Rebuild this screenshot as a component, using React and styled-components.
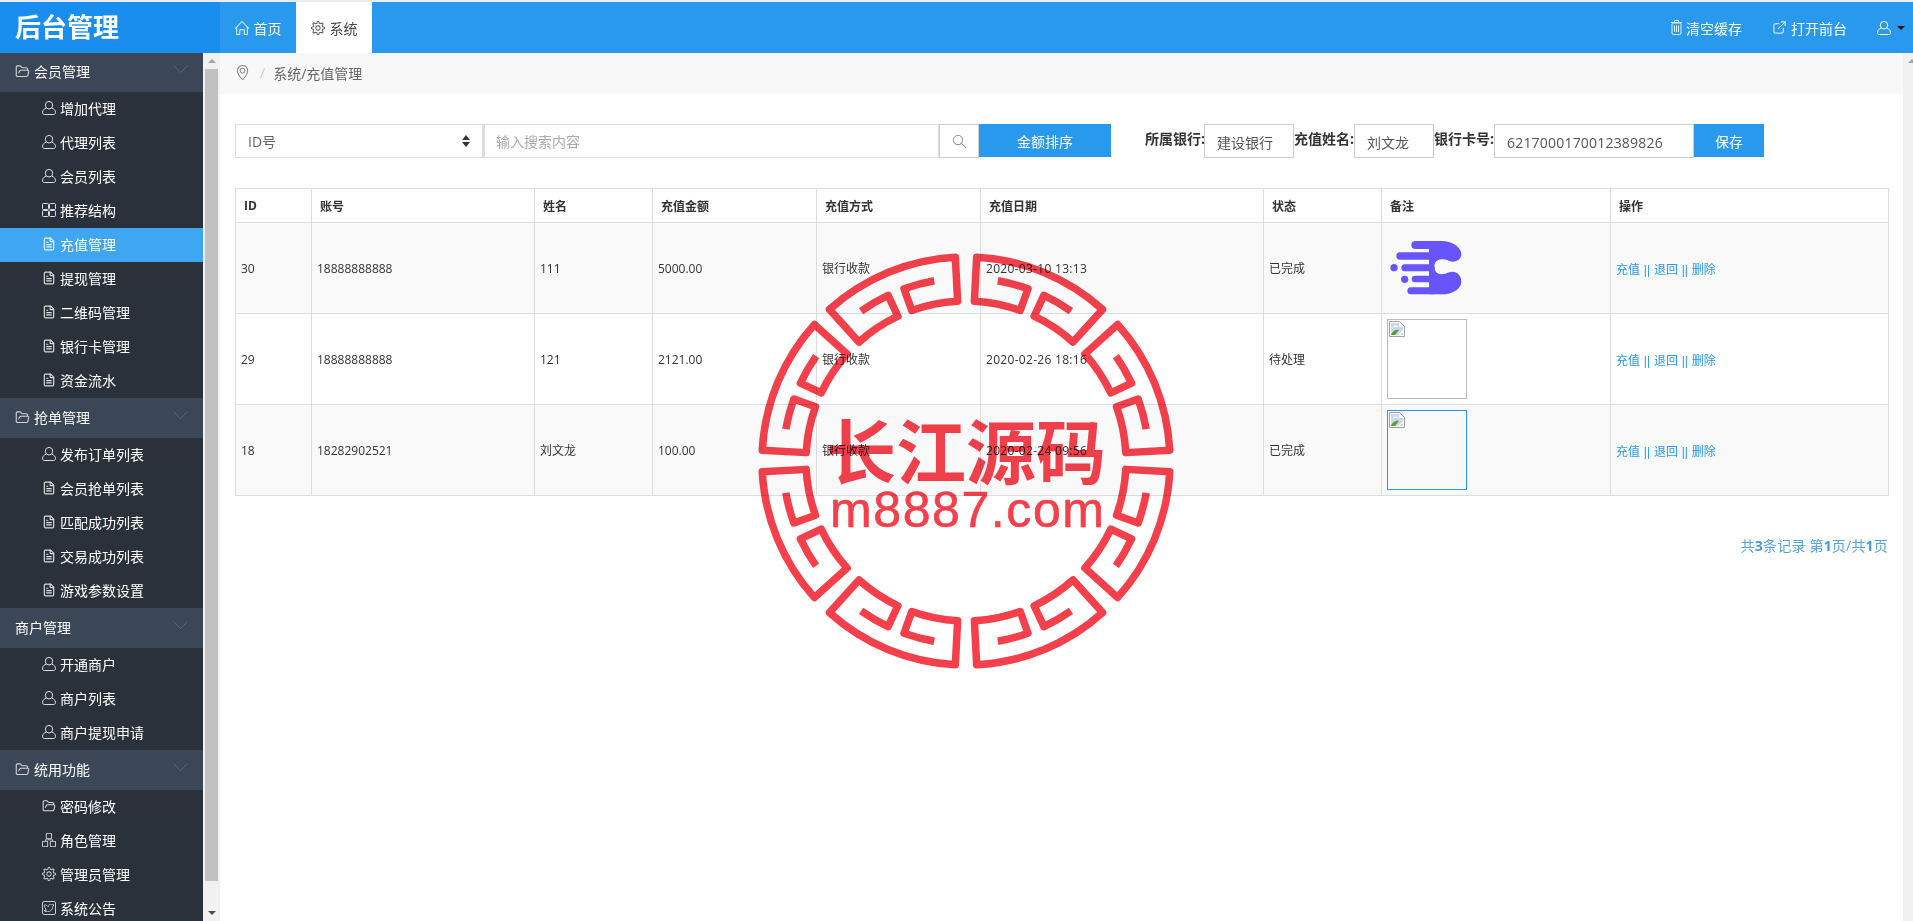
import React from "react";
import styled, { createGlobalStyle } from "styled-components";
import { SlHome, SlSettings, SlOrganization, SlSocialTwitter, SlLocationPin, SlMagnifier } from "react-icons/sl";
import { FileText, ExternalLink, FolderOpen } from "lucide-react";

const Global = createGlobalStyle`
  html, body { margin: 0; padding: 0; background: #fff; overflow: hidden; }
  * { box-sizing: border-box; }
  body { font-family: "Open Sans", "Noto Sans CJK SC", sans-serif; font-size: 14px; color: #333; }
`;

const Page = styled.div`
  position: relative;
  width: 1913px;
  height: 921px;
  overflow: hidden;
  display: flex;
  flex-direction: column;
  border-top: 2px solid #e9eef2;
`;

const Header = styled.header`
  height: 51px;
  flex: none;
  display: flex;
  background: #2899ed;
  color: #fff;
`;
const Logo = styled.div`
  width: 220px;
  background: #1a8eee;
  padding-left: 15px;
  font-size: 26px;
  font-weight: 700;
  line-height: 50px;
`;
const Tab = styled.div`
  width: 76px;
  display: flex;
  align-items: center;
  justify-content: center;
  gap: 5px;
  background: ${p => (p.$active ? "#fff" : "#2899ed")};
  color: ${p => (p.$active ? "#444" : "#fff")};
  svg { font-size: 14px; }
`;
const HeaderRight = styled.div`
  margin-left: auto;
  display: flex;
  align-items: center;
  padding-right: 8px;
`;
const HeaderLink = styled.div`
  display: flex;
  align-items: center;
  gap: 4px;
  margin-right: 30px;
`;
const Caret = styled.span`
  margin-left: 6px;
  border-left: 4px solid transparent;
  border-right: 4px solid transparent;
  border-top: 4px solid #111;
`;

const Body = styled.div`
  flex: 1;
  min-height: 0;
  display: flex;
`;
const Sidebar = styled.nav`
  width: 203px;
  flex: none;
  background: #2a313b;
  overflow: hidden;
`;
const SideList = styled.div`
  margin-top: -1px;
`;
const Group = styled.div`
  height: 40px;
  display: flex;
  align-items: center;
  gap: 4px;
  padding: 0 15px 2px;
  background: #3b4657;
  color: #fff;
  svg.lead { width: 15px; height: 15px; color: #d0d3d6; }
`;
const Chevron = styled.svg`
  margin-left: auto;
  margin-bottom: 3px;
`;
const Item = styled.div`
  height: 34px;
  display: flex;
  align-items: center;
  gap: 4px;
  padding: 0 0 2px 42px;
  color: #fff;
  background: ${p => (p.$active ? "#3fa6f2" : "transparent")};
  svg { flex: none; width: 14px; height: 14px; color: ${p => (p.$active ? "#e8f4fd" : "#dcdee0")}; }
`;
const BoxedIcon = styled.span`
  width: 14px;
  height: 14px;
  flex: none;
  border: 1px solid #c9ccd0;
  border-radius: 2px;
  display: flex;
  align-items: center;
  justify-content: center;
  svg { width: 10px; height: 10px; }
`;

const Track = styled.div`
  flex: none;
  width: ${p => p.$w}px;
  background: #f1f1f1;
  display: flex;
  flex-direction: column;
  align-items: center;
`;
const Thumb = styled.div`
  width: 13px;
  height: 812px;
  background: #c1c1c1;
`;
const ArrowBtn = styled.div`
  height: 16px;
  flex: none;
  display: flex;
  align-items: center;
  justify-content: center;
  align-self: ${p => (p.$edge ? "flex-end" : "center")};
  margin-right: ${p => (p.$edge ? "-3px" : "0")};
  margin-top: ${p => (p.$down ? "auto" : "0")};
  &::before {
    content: "";
    border-left: 4px solid transparent;
    border-right: 4px solid transparent;
    ${p => (p.$down ? "border-top: 4px solid #505050;" : "border-bottom: 4px solid #a3a3a3;")}
  }
`;

const Main = styled.main`
  flex: 1;
  min-width: 0;
  display: flex;
  flex-direction: column;
`;
const Crumb = styled.div`
  height: 41px;
  flex: none;
  background: #f8f8f8;
  padding: 0 0 2px 15px;
  display: flex;
  align-items: center;
  color: #666;
  font-size: 14px;
  svg { font-size: 15px; color: #808080; }
`;
const Slash = styled.span`
  color: #ccc;
  margin: 0 8px 0 10px;
`;
const Content = styled.div`
  padding: 30px 15px 0 15px;
`;
const Toolbar = styled.div`
  height: 34px;
  display: flex;
  align-items: stretch;
`;
const SelectBox = styled.div`
  width: 248px;
  border: 1px solid #ddd;
  padding: 0 12px;
  display: flex;
  align-items: center;
  justify-content: space-between;
  color: #666;
  font-size: 14px;
`;
const SearchInput = styled.input`
  width: 456px;
  border: 1px solid #ddd;
  border-left-width: 2px;
  padding: 1px 11px 0;
  font: inherit;
  outline: none;
  color: #555;
  &::placeholder { color: #aaa; opacity: 1; }
`;
const SearchBtn = styled.div`
  width: 40px;
  border: 1px solid #ccc;
  display: flex;
  align-items: center;
  justify-content: center;
  svg { font-size: 13px; color: #888; }
`;
const Button = styled.div`
  width: ${p => p.$w}px;
  background: #2899ed;
  color: #fff;
  display: flex;
  align-items: center;
  justify-content: center;
  margin-bottom: 1px;
`;
const Label = styled.span`
  font-weight: 700;
  color: #333;
  padding-top: 5px;
  width: ${p => p.$w}px;
  flex: none;
  white-space: nowrap;
  margin-left: ${p => p.$ml || 0}px;
  line-height: 20px;
`;
const Field = styled.input`
  width: ${p => p.$w}px;
  border: 1px solid #ccc;
  padding: 2px 0 0 12px;
  font: inherit;
  color: #555;
  letter-spacing: ${p => p.$ls || 0}px;
  outline: none;
`;

const Table = styled.table`
  margin-top: 30px;
  width: 1653px;
  table-layout: fixed;
  border-collapse: collapse;
  font-size: 12px;
`;
const Th = styled.th`
  height: 34px;
  border: 1px solid #ddd;
  text-align: left;
  padding: 0 0 0 8px;
  font-weight: 700;
  color: #333;
  background: #fff;
`;
const Tr = styled.tr`
  background: ${p => (p.$odd ? "#f9f9f9" : "#fff")};
`;
const Td = styled.td`
  height: 91px;
  border: 1px solid #ddd;
  padding: 0 0 0 5px;
  color: #333;
  vertical-align: middle;
`;
const DateText = styled.span`
  letter-spacing: 0.3px;
`;
const Actions = styled.span`
  color: #2899ed;
  font-family: "Liberation Sans", "Noto Sans CJK SC", sans-serif;
  word-spacing: 0.5px;
  position: relative;
  top: 1px;
`;
const BrokenImage = styled.div`
  width: 80px;
  height: 80px;
  border: 1px solid ${p => p.$color};
  padding: 1px;
  svg { display: block; }
`;
const BrandLogo = styled.svg`
  display: block;
  width: 90px;
  height: 66px;
  margin-left: -3px;
`;
const Pager = styled.div`
  margin-top: 40px;
  width: 1653px;
  text-align: right;
  color: #56a3de;
  font-size: 14px;
  letter-spacing: 0.2px;
  line-height: 20px;
  b { color: #3f9be4; }
`;

const StampWrap = styled.svg`
  position: absolute;
  left: 751px;
  top: 244px;
  width: 430px;
  height: 430px;
  mix-blend-mode: multiply;
  pointer-events: none;
  filter: blur(0.6px);
`;
const StampTitle = styled.text`
  font-family: "Noto Sans CJK SC", sans-serif;
  font-weight: 700;
  font-size: 70px;
  fill: #f5404c;
`;
const StampSite = styled.text`
  font-family: "Liberation Sans", sans-serif;
  font-size: 50px;
  fill: #f5404c;
  stroke: #f5404c;
  stroke-width: 0.6px;
`;

const UserGlyph = ({ size = 14 }) => (
  <svg width={size} height={size} viewBox="0 0 14 14" fill="none" stroke="currentColor" strokeWidth="1">
    <ellipse cx="7" cy="4.2" rx="3.7" ry="3.8" />
    <path d="M4 7.2C2 8 .6 9.3.6 11v.8c0 1 .7 1.7 1.7 1.7h9.4c1 0 1.7-.7 1.7-1.7V11c0-1.7-1.4-3-3.4-3.8" />
  </svg>
);
const GridGlyph = () => (
  <svg viewBox="0 0 14 14" fill="none" stroke="currentColor" strokeWidth="1">
    <rect x=".5" y=".5" width="6" height="6" rx="1" />
    <rect x="7.5" y=".5" width="6" height="6" rx="1" />
    <rect x=".5" y="7.5" width="6" height="6" rx="1" />
    <rect x="7.5" y="7.5" width="6" height="6" rx="1" />
  </svg>
);
const TrashGlyph = () => (
  <svg width="11" height="15" viewBox="0 0 11 15" fill="none" stroke="#d8f0ff" strokeWidth="1">
    <rect x="1" y="3" width="9" height="11.5" rx="1.5" />
    <path d="M0 2.5h11M3.5 2.5V.5h4v2M3.5 5.5v6.5M5.5 5.5v6.5M7.5 5.5v6.5" />
  </svg>
);
const DocIcon = () => <FileText strokeWidth={2} />;
const FolderIcon = () => <FolderOpen strokeWidth={1.8} />;

const columns = [76, 223, 118, 164, 164, 283, 118, 229, 278];
const heads = ["ID", "账号", "姓名", "充值金额", "充值方式", "充值日期", "状态", "备注", "操作"];

const menu = [
  { title: "会员管理", icon: true, items: [["增加代理", UserGlyph], ["代理列表", UserGlyph], ["会员列表", UserGlyph], ["推荐结构", GridGlyph], ["充值管理", DocIcon, true], ["提现管理", DocIcon], ["二维码管理", DocIcon], ["银行卡管理", DocIcon], ["资金流水", DocIcon]] },
  { title: "抢单管理", icon: true, items: [["发布订单列表", UserGlyph], ["会员抢单列表", DocIcon], ["匹配成功列表", DocIcon], ["交易成功列表", DocIcon], ["游戏参数设置", DocIcon]] },
  { title: "商户管理", icon: false, items: [["开通商户", UserGlyph], ["商户列表", UserGlyph], ["商户提现申请", UserGlyph]] },
  { title: "统用功能", icon: true, items: [["密码修改", FolderIcon], ["角色管理", SlOrganization], ["管理员管理", SlSettings], ["系统公告", "twitter"]] },
];

const rows = [
  { id: 30, acc: "18888888888", name: "111", amt: "5000.00", date: "2020-03-10 13:13", st: "已完成", img: "logo" },
  { id: 29, acc: "18888888888", name: "121", amt: "2121.00", date: "2020-02-26 18:16", st: "待处理", img: "#bbb" },
  { id: 18, acc: "18282902521", name: "刘文龙", amt: "100.00", date: "2020-02-24 09:56", st: "已完成", img: "#2899ed" },
];

const Broken = () => (
  <svg width="16" height="16" viewBox="0 0 16 16">
    <path d="M.5.5h10l5 5v10H.5z" fill="#fff" stroke="#a0a0a0" />
    <path d="M2 2h8v4h4v8H2z" fill="#c9d9f5" />
    <path d="M2 14c1-4 5-6 8-5l-4 5z" fill="#5aa02c" />
    <path d="M4 6c1-2 4-2 5 0z" fill="#fff" />
    <path d="M8 15L15 8v2l-5 5z" fill="#fff" />
  </svg>
);

const Brand = () => (
  <BrandLogo viewBox="0 0 270 198" fill="#6854ff">
    <path d="M135 18H172C208 18 232 38 232 58C232 76 212 84 196 78C186 74 180 73 172 73C144 73 144 118 172 118C182 118 186 116 196 112C214 106 232 118 232 140C232 162 206 178 172 178H135Z" />
    <rect x="82" y="18" width="80" height="24" rx="12" />
    <rect x="37" y="52" width="110" height="22" rx="11" />
    <rect x="52" y="88" width="100" height="21" rx="10.5" />
    <rect x="83" y="122" width="70" height="20" rx="10" />
    <rect x="70" y="157" width="90" height="21" rx="10.5" />
    <circle cx="30" cy="98" r="11" />
    <circle cx="62" cy="133" r="11" />
  </BrandLogo>
);

const C = 215;
const pt = (deg, r) => {
  const t = (deg * Math.PI) / 180;
  return `${(C + r * Math.sin(t)).toFixed(2)} ${(C - r * Math.cos(t)).toFixed(2)}`;
};
const arc = (r, cw, deg) => `A${r} ${r} 0 0 ${cw ? 1 : 0} ${pt(deg, r)}`;
const segment = a => {
  const b = a + 39;
  return [
    `M${pt(a + 7, 183)}`, arc(183, true, a + 16.8),
    `L${pt(a + 16.8, 160)}`, arc(160, false, a),
    `L${pt(a, 204)}`, arc(204, true, b),
    `L${pt(b, 160)}`, arc(160, false, b - 16.8),
    `L${pt(b - 16.8, 183)}`, arc(183, true, b - 7),
  ].join(" ");
};

const Stamp = () => (
  <StampWrap viewBox="0 0 430 430">
    {[0, 1, 2, 3, 4, 5, 6, 7].map(k => (
      <path key={k} d={segment(k * 45 + 3)} fill="none" stroke="#f5404c" strokeWidth="7.5" strokeLinejoin="round" />
    ))}
    <StampTitle x="215" y="233" textAnchor="middle" textLength="280" lengthAdjust="spacingAndGlyphs">长江源码</StampTitle>
    <StampSite x="216" y="281" textAnchor="middle" textLength="274">m8887.com</StampSite>
  </StampWrap>
);

const SortArrows = () => (
  <svg width="8" height="12" viewBox="0 0 8 12" fill="#333"><path d="M4 0l4 5H0zM4 12L0 7h8z" /></svg>
);

export default function App() {
  return (
    <Page>
      <Global />
      <Header>
        <Logo>后台管理</Logo>
        <Tab><SlHome />首页</Tab>
        <Tab $active><SlSettings />系统</Tab>
        <HeaderRight>
          <HeaderLink><TrashGlyph />清空缓存</HeaderLink>
          <HeaderLink><ExternalLink size={15} strokeWidth={1.5} />打开前台</HeaderLink>
          <UserGlyph />
          <Caret />
        </HeaderRight>
      </Header>
      <Body>
        <Sidebar>
          <SideList>
            {menu.map(g => (
              <React.Fragment key={g.title}>
                <Group>
                  {g.icon && <FolderOpen className="lead" strokeWidth={1.8} />}
                  {g.title}
                  <Chevron width="15" height="9" viewBox="0 0 15 9" fill="none" stroke="#59647a" strokeWidth="1"><path d="M.5.5l7 7 7-7" /></Chevron>
                </Group>
                {g.items.map(([label, Icon, active]) => (
                  <Item key={label} $active={active}>
                    {Icon === "twitter" ? <BoxedIcon><SlSocialTwitter /></BoxedIcon> : <Icon />}
                    {label}
                  </Item>
                ))}
              </React.Fragment>
            ))}
          </SideList>
        </Sidebar>
        <Track $w={17}>
          <ArrowBtn />
          <Thumb />
          <ArrowBtn $down />
        </Track>
        <Main>
          <Crumb>
            <SlLocationPin />
            <Slash>/</Slash>
            系统/充值管理
          </Crumb>
          <Content>
            <Toolbar>
              <SelectBox>ID号<SortArrows /></SelectBox>
              <SearchInput placeholder="输入搜索内容" />
              <SearchBtn><SlMagnifier /></SearchBtn>
              <Button $w={132}>金额排序</Button>
              <Label $w={59} $ml={34}>所属银行:</Label>
              <Field $w={90} readOnly value="建设银行" />
              <Label $w={60}>充值姓名:</Label>
              <Field $w={80} readOnly value="刘文龙" />
              <Label $w={60}>银行卡号:</Label>
              <Field $w={200} $ls={0.2} readOnly value="6217000170012389826" />
              <Button $w={70}>保存</Button>
            </Toolbar>
            <Table>
              <colgroup>{columns.map((w, i) => <col key={i} style={{ width: w }} />)}</colgroup>
              <thead>
                <tr>{heads.map(h => <Th key={h}>{h}</Th>)}</tr>
              </thead>
              <tbody>
                {rows.map((r, i) => (
                  <Tr key={r.id} $odd={i % 2 === 0}>
                    <Td>{r.id}</Td>
                    <Td>{r.acc}</Td>
                    <Td>{r.name}</Td>
                    <Td>{r.amt}</Td>
                    <Td>银行收款</Td>
                    <Td><DateText>{r.date}</DateText></Td>
                    <Td>{r.st}</Td>
                    <Td>
                      {r.img === "logo" ? <Brand /> : <BrokenImage $color={r.img}><Broken /></BrokenImage>}
                    </Td>
                    <Td><Actions>充值 || 退回 || 删除</Actions></Td>
                  </Tr>
                ))}
              </tbody>
            </Table>
            <Pager>共<b>3</b>条记录 第<b>1</b>页/共<b>1</b>页</Pager>
          </Content>
        </Main>
        <Track $w={10}>
          <ArrowBtn $edge />
        </Track>
      </Body>
      <Stamp />
    </Page>
  );
}
